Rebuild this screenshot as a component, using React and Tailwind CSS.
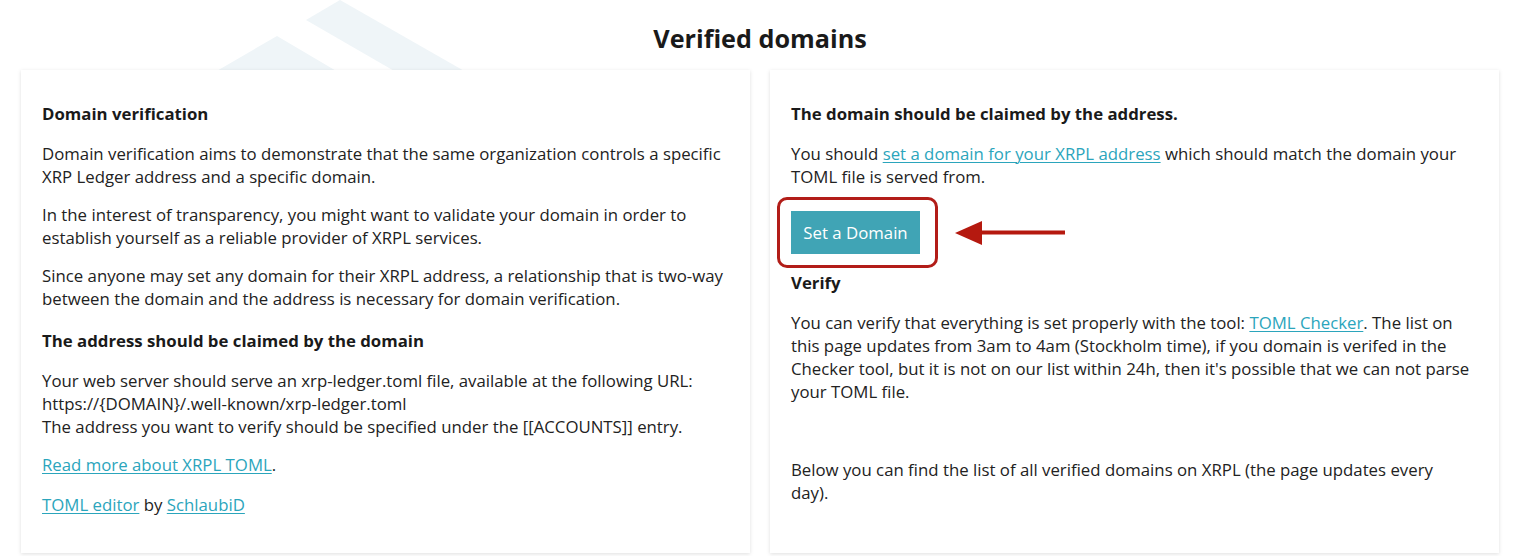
import React from 'react';

const linkClass = 'text-[#2ba5bc] underline underline-offset-2 decoration-1';

function Card({ children, className = '' }) {
  return (
    <div className={`bg-white shadow-[0_1px_4px_rgba(0,0,0,0.13)] pl-[21px] ${className}`}>
      {children}
    </div>
  );
}

function Backdrop() {
  return (
    <svg className="absolute left-0 top-0 pointer-events-none" width="520" height="80" viewBox="0 0 520 80">
      <polygon points="215,72 277,36 338,72" fill="#eff5f8" />
      <polygon points="340,0 466,72 396,72 306,20" fill="#eff5f8" />
    </svg>
  );
}

function SetDomainButton() {
  return (
    <div className="relative mt-[23px] w-[129px]">
      <div className="absolute -left-[14px] -top-[14px] w-[161px] h-[71px] border-[3px] border-[#b21d18] rounded-[10px]" />
      <button className="relative h-[43px] w-[129px] bg-[#40a4b5] text-white text-[16.8px] leading-[24px]">
        Set a Domain
      </button>
      <svg className="absolute left-[163px] top-[9px]" width="112" height="28" viewBox="0 0 112 28">
        <polygon points="1,13 28,1 28,25" fill="#b5190f" />
        <rect x="26" y="10.5" width="85" height="4" fill="#b5190f" />
      </svg>
    </div>
  );
}

export default function App() {
  return (
    <div
      className="relative min-h-screen bg-white text-[#222] text-[16.8px] leading-[23px]"
      style={{ fontFamily: '"Open Sans", "Noto Sans", sans-serif' }}
    >
      <Backdrop />
      <div className="relative px-[21px]">
        <h1 className="pt-[22px] mb-[16px] text-center text-[25.2px] leading-[32px] font-bold text-[#1a1a1a]">
          Verified domains
        </h1>

        <div className="grid grid-cols-2 gap-[20px]">
          <Card className="pr-[21px] pt-[32px] pb-[37px]">
            <h4 className="font-bold leading-[24px] mb-[16px] text-[#1a1a1a]">Domain verification</h4>
            <p className="mb-[15px]">
              Domain verification aims to demonstrate that the same organization controls a specific XRP Ledger
              address and a specific domain.
            </p>
            <p className="mb-[15px]">
              In the interest of transparency, you might want to validate your domain in order to establish yourself
              as a reliable provider of XRPL services.
            </p>
            <p className="mb-[19px]">
              Since anyone may set any domain for their XRPL address, a relationship that is two-way between the
              domain and the address is necessary for domain verification.
            </p>
            <h4 className="font-bold leading-[24px] mb-[16px] text-[#1a1a1a]">
              The address should be claimed by the domain
            </h4>
            <p className="mb-[15px]">
              Your web server should serve an xrp-ledger.toml file, available at the following URL:
              <br />
              https://{'{DOMAIN}'}/.well-known/xrp-ledger.toml
              <br />
              The address you want to verify should be specified under the [[ACCOUNTS]] entry.
            </p>
            <p className="mb-[17px]">
              <a href="#" className={linkClass}>Read more about XRPL TOML</a>.
            </p>
            <p>
              <a href="#" className={linkClass}>TOML editor</a> by{' '}
              <a href="#" className={linkClass}>SchlaubiD</a>
            </p>
          </Card>

          <Card className="pr-[27px] pt-[32px]">
            <h4 className="font-bold leading-[24px] mb-[16px] text-[#1a1a1a]">
              The domain should be claimed by the address.
            </h4>
            <p>
              You should <a href="#" className={linkClass}>set a domain for your XRPL address</a> which should match
              the domain your TOML file is served from.
            </p>
            <SetDomainButton />
            <h4 className="mt-[17px] font-bold leading-[24px] mb-[16px] text-[#1a1a1a]">Verify</h4>
            <p>
              You can verify that everything is set properly with the tool:{' '}
              <a href="#" className={linkClass}>TOML Checker</a>. The list on this page updates from 3am to 4am
              (Stockholm time), if you domain is verifed in the Checker tool, but it is not on our list within 24h,
              then it's possible that we can not parse your TOML file.
            </p>
            <p className="mt-[55px]">
              Below you can find the list of all verified domains on XRPL (the page updates every day).
            </p>
          </Card>
        </div>
      </div>
    </div>
  );
}
